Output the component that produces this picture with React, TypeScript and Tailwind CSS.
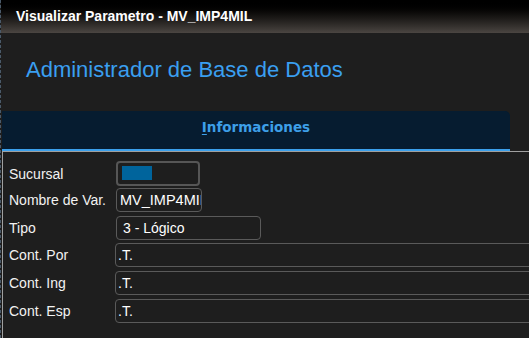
import React from "react";

function Row({
  label,
  children,
  className,
}: {
  label: string;
  children: React.ReactNode;
  className?: string;
}) {
  return (
    <div className={"flex items-center " + (className ?? "")}>
      <div className="w-[113px] shrink-0 pl-[6px] text-[14px] text-[#f2f2f2] leading-none">{label}</div>
      {children}
    </div>
  );
}

export default function App() {
  return (
    <div
      className="w-[529px] h-[338px] overflow-hidden bg-[#1e1e1e] border-l border-dashed border-[#4a5a6a]"
      style={{ fontFamily: '"Liberation Sans", Arial, sans-serif' }}
    >
      <div className="h-[33px] bg-gradient-to-b from-black to-[#4b4642] flex items-center pl-[15px] text-white font-bold text-[14px]">
        Visualizar Parametro - MV_IMP4MIL
      </div>
      <div className="h-[78px] pl-[25px] pt-[25px] text-[22px] leading-[24px] text-[#3a9ff0]">
        Administrador de Base de Datos
      </div>
      <div className="ml-[1px] w-[508px] h-[40px] bg-[#061c30] rounded-tr-[5px] border-b-2 border-[#3ba0ec] flex items-center justify-center pb-[6px]">
        <span
          className="text-[13.5px] font-bold text-[#3d9fe8]"
          style={{ fontFamily: '"DejaVu Sans", Verdana, sans-serif' }}
        >
          <span className="underline underline-offset-2">I</span>nformaciones
        </span>
      </div>
      <div className="ml-[1px] h-[200px] border-t border-l border-[#a0a0a0] pt-[9px]">
        <div className="flex flex-col">
          <Row label="Sucursal" className="h-[25px]">
            <div className="w-[84px] h-[25px] border-2 border-[#565656] rounded-[4px] pl-[4px] pt-[3px]">
              <div className="w-[30px] h-[14px] bg-[#00649c]" />
            </div>
          </Row>
          <Row label="Nombre de Var." className="h-[24px] mt-[2px]">
            <input
              readOnly
              value="MV_IMP4MIL"
              className="w-[86px] h-[24px] border border-[#5a5a5a] rounded-[4px] pl-[3px] pr-0 bg-transparent text-[14.5px] text-white outline-none"
              style={{ fontFamily: '"Liberation Sans", Arial, sans-serif' }}
            />
          </Row>
          <Row label="Tipo" className="h-[24px] mt-[4px]">
            <div className="w-[145px] h-[24px] border border-[#5a5a5a] rounded-[4px] pl-[6px] flex items-center text-[14px] text-white">
              3 - Lógico
            </div>
          </Row>
          <Row label="Cont. Por" className="h-[24px] mt-[3px]">
            <div className="-ml-px w-[440px] shrink-0 h-[24px] border border-[#5a5a5a] rounded-[4px] pl-[2px] flex items-center text-[14px] text-white">
              .T.
            </div>
          </Row>
          <Row label="Cont. Ing" className="h-[24px] mt-[4px]">
            <div className="-ml-px w-[440px] shrink-0 h-[24px] border border-[#5a5a5a] rounded-[4px] pl-[2px] flex items-center text-[14px] text-white">
              .T.
            </div>
          </Row>
          <Row label="Cont. Esp" className="h-[24px] mt-[4px]">
            <div className="-ml-px w-[440px] shrink-0 h-[24px] border border-[#5a5a5a] rounded-[4px] pl-[2px] flex items-center text-[14px] text-white">
              .T.
            </div>
          </Row>
        </div>
      </div>
    </div>
  );
}
